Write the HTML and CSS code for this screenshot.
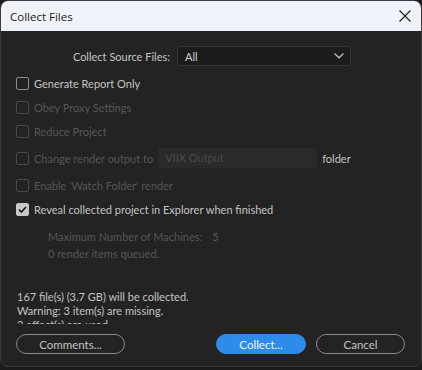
FILE: index.html
```html
<!DOCTYPE html>
<html>
<head>
<meta charset="utf-8">
<link rel="stylesheet" href="styles.css">
</head>
<body>
<div class="window">
  <div class="titlebar">
    <span class="title">Collect Files</span>
    <svg class="close" width="12" height="12" viewBox="0 0 12 12"><path d="M0.5 0.5 L11.5 11.5 M11.5 0.5 L0.5 11.5" stroke="#1a1a1a" stroke-width="1.1" fill="none"/></svg>
  </div>
  <div class="content">
    <div class="source-row">
      <span class="source-label">Collect Source Files:</span>
      <div class="select"><span>All</span>
        <svg width="10" height="6" viewBox="0 0 10 6"><path d="M0.5 0.5 L5 4.8 L9.5 0.5" stroke="#bdbdbd" stroke-width="1.2" fill="none"/></svg>
      </div>
    </div>
    <div class="opts">
      <div class="opt"><span class="cb"></span><span>Generate Report Only</span></div>
      <div class="opt disabled"><span class="cb"></span><span>Obey Proxy Settings</span></div>
      <div class="opt disabled"><span class="cb"></span><span>Reduce Project</span></div>
      <div class="opt disabled tall"><span class="cb"></span><span>Change render output to</span><span class="field">VIIX Output</span><span class="folder">folder</span></div>
      <div class="opt disabled"><span class="cb"></span><span>Enable 'Watch Folder' render</span></div>
      <div class="opt"><span class="cb checked"><svg width="11" height="11" viewBox="0 0 11 11"><path d="M2 5.6 L4.4 8 L9 3" stroke="#1f1f1f" stroke-width="1.7" fill="none"/></svg></span><span>Reveal collected project in Explorer when finished</span></div>
    </div>
    <div class="machines">
      <div class="mrow"><span>Maximum Number of Machines:</span><span class="mval">5</span></div>
      <div class="mrow">0 render items queued.</div>
    </div>
    <div class="summary">
      <div>167 file(s) (3.7 GB) will be collected.</div>
      <div>Warning: 3 item(s) are missing.</div>
      <div>2 effect(s) are used.</div>
    </div>
    <div class="buttons">
      <button class="btn">Comments...</button>
      <div class="right">
        <button class="btn primary">Collect...</button>
        <button class="btn">Cancel</button>
      </div>
    </div>
  </div>
</div>
</body>
</html>
```
FILE: styles.css
```css
html, body {
  margin: 0;
  padding: 0;
  background: #1c1c1c;
}
body {
  width: 422px;
  height: 370px;
  overflow: hidden;
  font-family: "Lato", "Open Sans", sans-serif;
}
.window {
  box-sizing: border-box;
  width: 422px;
  height: 367px;
  border: 1px solid #3a3a3a;
  border-radius: 8px;
  background: #232323;
  overflow: hidden;
  display: flex;
  flex-direction: column;
}
.titlebar {
  height: 30px;
  flex: none;
  background: #eff2f9;
  display: flex;
  align-items: center;
  justify-content: space-between;
  padding: 0 10px 0 9px;
}
.title {
  font-family: "Open Sans", sans-serif;
  font-size: 11.5px;
  color: #1a1a1a;
}
.content {
  flex: 1;
  display: flex;
  flex-direction: column;
  padding: 0 16px 0 15px;
  color: #c3c3c3;
  font-size: 11px;
  white-space: nowrap;
}
.source-row {
  display: flex;
  align-items: center;
  margin-top: 15px;
  padding-left: 56px;
  height: 20px;
}
.source-label {
  width: 98px;
  text-align: right;
  margin-right: 7px;
}
.select {
  box-sizing: border-box;
  width: 174px;
  height: 20px;
  border: 1px solid #333;
  border-radius: 3px;
  background: #1c1c1c;
  display: flex;
  align-items: center;
  justify-content: space-between;
  padding: 0 6px 0 7px;
  color: #d0d0d0;
}
.opts {
  margin-top: 5px;
  display: flex;
  flex-direction: column;
}
.opt {
  display: flex;
  align-items: center;
  height: 24px;
  gap: 5px;
}
.opt.tall { height: 30px; }
.opt.disabled { color: #565656; }
.cb {
  box-sizing: border-box;
  width: 13px;
  height: 13px;
  border: 1.5px solid #8c8c8c;
  border-radius: 2px;
  flex: none;
  display: flex;
  align-items: center;
  justify-content: center;
}
.opt.disabled .cb { border-color: #484848; }
.cb.checked { background: #c8c8c8; border-color: #c8c8c8; }
.field {
  box-sizing: border-box;
  width: 159px;
  height: 20px;
  background: #2a2a2a;
  border-radius: 2px;
  padding-left: 7px;
  line-height: 20px;
  color: #4a4a4a;
}
.folder { color: #c3c3c3; }
.machines {
  margin-top: 7px;
  padding-left: 32px;
  color: #565656;
  display: flex;
  flex-direction: column;
}
.mrow { height: 17px; line-height: 17px; display: flex; }
.mval { margin-left: 10px; }
.summary {
  margin-top: 28px;
  height: 34px;
  overflow: hidden;
  line-height: 14px;
  color: #c3c3c3;
  padding-left: 1px;
}
.buttons {
  margin-top: 10px;
  display: flex;
  justify-content: space-between;
}
.right { display: flex; gap: 10px; }
.btn {
  box-sizing: border-box;
  height: 20px;
  width: 109px;
  border: 1.5px solid #8a8a8a;
  border-radius: 10px;
  background: transparent;
  color: #c3c3c3;
  font-family: "Lato", "Open Sans", sans-serif;
  font-size: 11.5px;
  padding: 0;
}
.btn.primary {
  width: 90px;
  background: #2d8bea;
  border-color: #2d8bea;
  color: #f2f6fc;
}
.right .btn:last-child { width: 89px; }
```
